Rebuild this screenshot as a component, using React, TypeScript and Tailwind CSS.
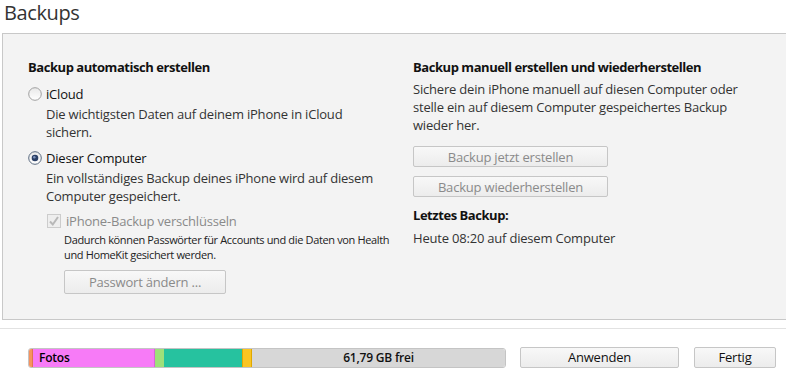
import React from "react";

const font = { fontFamily: '"Open Sans", "Noto Sans", sans-serif' };

function Radio({ checked }: { checked?: boolean }) {
  return (
    <svg width="14" height="14" viewBox="0 0 14 14" className="shrink-0">
      <defs>
        <linearGradient id={checked ? "rg1" : "rg0"} x1="0" y1="0" x2="0" y2="1">
          <stop offset="0" stopColor="#e8e8e8" />
          <stop offset="1" stopColor="#ffffff" />
        </linearGradient>
      </defs>
      <circle cx="7" cy="7" r="6.3" fill={`url(#${checked ? "rg1" : "rg0"})`} stroke={checked ? "#5b6b80" : "#a0a0a0"} strokeWidth="1" />
      {checked && <circle cx="7" cy="7" r="3.3" fill="#2a3f66" />}
      {checked && <circle cx="6.3" cy="6.2" r="1.2" fill="#7d93bb" />}
    </svg>
  );
}

function Check() {
  return (
    <svg width="14" height="14" viewBox="0 0 14 14" className="shrink-0">
      <rect x="0.5" y="0.5" width="13" height="13" fill="#eeeeee" stroke="#cccccc" />
      <path d="M3 7.5 L5.8 10.5 L11 3" fill="none" stroke="#b8b8b8" strokeWidth="2" />
    </svg>
  );
}

function Btn({ children, w, dis }: { children: React.ReactNode; w: string; dis?: boolean }) {
  return (
    <div
      className={`${w} h-[21px] flex items-center justify-center rounded-[2px] border border-[#c6c6c6] bg-gradient-to-b from-[#f8f8f8] to-[#ececec] text-[13px] ${dis ? "text-[#8a8a8a]" : "text-[#111]"}`}
    >
      {children}
    </div>
  );
}

export default function App() {
  return (
    <div className="w-[786px] h-[372px] bg-white overflow-hidden text-[#333] tracking-[-0.2px]" style={font}>
      <div className="h-[33px] pl-[4px] pt-[0px] text-[20px] leading-[26px] text-[#333] tracking-[-0.4px]">Backups</div>
      <div className="ml-[2px] w-[800px] h-[287px] border border-[#c8c8c8] bg-[#f3f3f3] flex pt-[24px] pl-[25px]">
        <div className="w-[385px] text-[13px] leading-[18px]">
          <div className="font-bold text-[#111] h-[20px] tracking-[-0.45px]">Backup automatisch erstellen</div>
          <div className="flex items-center gap-[4px] mt-[7px] text-[#111]">
            <Radio />
            <span>iCloud</span>
          </div>
          <div className="pl-[18px] mt-[2px]">
            Die wichtigsten Daten auf deinem iPhone in iCloud
            <br />
            sichern.
          </div>
          <div className="flex items-center gap-[4px] mt-[8px] text-[#111]">
            <Radio checked />
            <span>Dieser Computer</span>
          </div>
          <div className="pl-[18px] mt-[2px]">
            Ein vollständiges Backup deines iPhone wird auf diesem
            <br />
            Computer gespeichert.
          </div>
          <div className="flex items-center gap-[5px] pl-[19px] mt-[7px] text-[#8a8a8a]">
            <Check />
            <span>iPhone-Backup verschlüsseln</span>
          </div>
          <div className="pl-[36px] mt-[2px] text-[11px] leading-[15px] text-[#222] tracking-[-0.35px]">
            Dadurch können Passwörter für Accounts und die Daten von Health
            <br />
            und HomeKit gesichert werden.
          </div>
          <div className="pl-[36px] mt-[8px]">
            <Btn w="w-[162px] h-[24px]" dis>
              Passwort ändern ...
            </Btn>
          </div>
        </div>
        <div className="w-[360px] text-[13px] leading-[18px]">
          <div className="font-bold text-[#111] h-[20px] tracking-[-0.45px]">Backup manuell erstellen und wiederherstellen</div>
          <div className="mt-[2px]">
            Sichere dein iPhone manuell auf diesen Computer oder
            <br />
            stelle ein auf diesem Computer gespeichertes Backup
            <br />
            wieder her.
          </div>
          <div className="mt-[12px]">
            <Btn w="w-[195px]" dis>
              Backup jetzt erstellen
            </Btn>
          </div>
          <div className="mt-[9px]">
            <Btn w="w-[195px]" dis>
              Backup wiederherstellen
            </Btn>
          </div>
          <div className="font-bold text-[#111] mt-[9px] tracking-[-0.45px]">Letztes Backup:</div>
          <div className="mt-[5px]">Heute 08:20 auf diesem Computer</div>
        </div>
      </div>
      <div className="mt-[8px] h-[1px] bg-[#e2e2e2]" />
      <div className="flex items-center mt-[18px] pl-[28px]">
        <div className="w-[478px] h-[20px] flex rounded-[3px] overflow-hidden border border-[#c4c4c4] text-[12px] leading-[18px]">
          <div className="w-[4px] bg-[#f6935f] border-r border-[#e0784a]" />
          <div className="w-[122px] bg-[#f77bf7] border-r border-[#d864d8] pl-[6px] font-semibold text-black">Fotos</div>
          <div className="w-[9px] bg-[#9ee07a]" />
          <div className="w-[78px] bg-[#26c29f]" />
          <div className="w-[10px] bg-[#fac522] border-x border-[#e0a800]" />
          <div className="flex-1 bg-[#d7d7d7] text-center font-semibold text-[#111]">61,79 GB frei</div>
        </div>
        <div className="ml-[14px]">
          <Btn w="w-[159px] h-[21px]">Anwenden</Btn>
        </div>
        <div className="ml-[15px]">
          <Btn w="w-[82px] h-[21px]">Fertig</Btn>
        </div>
      </div>
    </div>
  );
}
